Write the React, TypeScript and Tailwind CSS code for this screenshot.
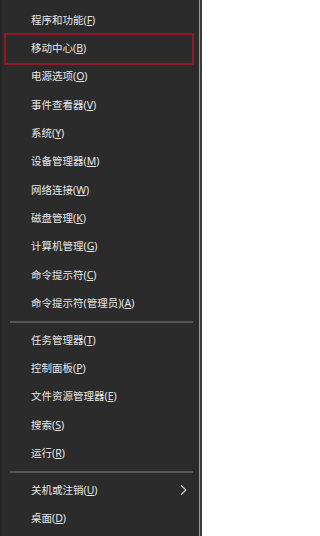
import React from "react";

type Item = { label: string; key: string; suffix?: string; highlight?: boolean; arrow?: boolean };

const groups: Item[][] = [
  [
    { label: "程序和功能", key: "F" },
    { label: "移动中心", key: "B", highlight: true },
    { label: "电源选项", key: "O" },
    { label: "事件查看器", key: "V" },
    { label: "系统", key: "Y" },
    { label: "设备管理器", key: "M" },
    { label: "网络连接", key: "W" },
    { label: "磁盘管理", key: "K" },
    { label: "计算机管理", key: "G" },
    { label: "命令提示符", key: "C" },
    { label: "命令提示符(管理员)", key: "A" },
  ],
  [
    { label: "任务管理器", key: "T" },
    { label: "控制面板", key: "P" },
    { label: "文件资源管理器", key: "E" },
    { label: "搜索", key: "S" },
    { label: "运行", key: "R" },
  ],
  [
    { label: "关机或注销", key: "U", arrow: true },
    { label: "桌面", key: "D" },
  ],
];

function Row({ item }: { item: Item }) {
  return (
    <div className="relative flex h-[28.3px] items-center pl-[29px] pr-[10px]">
      <span className="whitespace-nowrap text-[10.5px] leading-none text-[#e8e8e8]">
        {item.label}(<span className="underline decoration-[1px] underline-offset-[1px]">{item.key}</span>)
      </span>
      {item.arrow && (
        <svg
          className="absolute right-[12px] top-1/2 -translate-y-1/2"
          width="7"
          height="11"
          viewBox="0 0 7 11"
          fill="none"
        >
          <path d="M1 0.8 L5.8 5.5 L1 10.2" stroke="#c8c8c8" strokeWidth="1.2" />
        </svg>
      )}
      {item.highlight && (
        <div className="pointer-events-none absolute left-[2px] right-[5px] top-[-1px] bottom-[-2px] border-2 border-[#8e1b24]" />
      )}
    </div>
  );
}

export default function App() {
  return (
    <div
      className="flex h-[536px] w-[202px] bg-[#2b2b2b]"
      style={{ fontFamily: "'Noto Sans', 'Noto Sans CJK SC', sans-serif" }}
    >
      <div className="w-[2px] bg-[#252525]" />
      <div className="flex flex-1 flex-col pt-[6px]">
        {groups.map((g, gi) => (
          <React.Fragment key={gi}>
            {gi > 0 && (
              <div className="flex h-[8.7px] items-center pl-[8px] pr-[6px]">
                <div className="h-[2px] w-full bg-[#565656]" />
              </div>
            )}
            {g.map((it) => (
              <Row key={it.label} item={it} />
            ))}
          </React.Fragment>
        ))}
      </div>
      <div className="w-[1px] bg-[#9a9a9a]" />
      <div className="w-[2px] bg-[#3c3c3c]" />
    </div>
  );
}
